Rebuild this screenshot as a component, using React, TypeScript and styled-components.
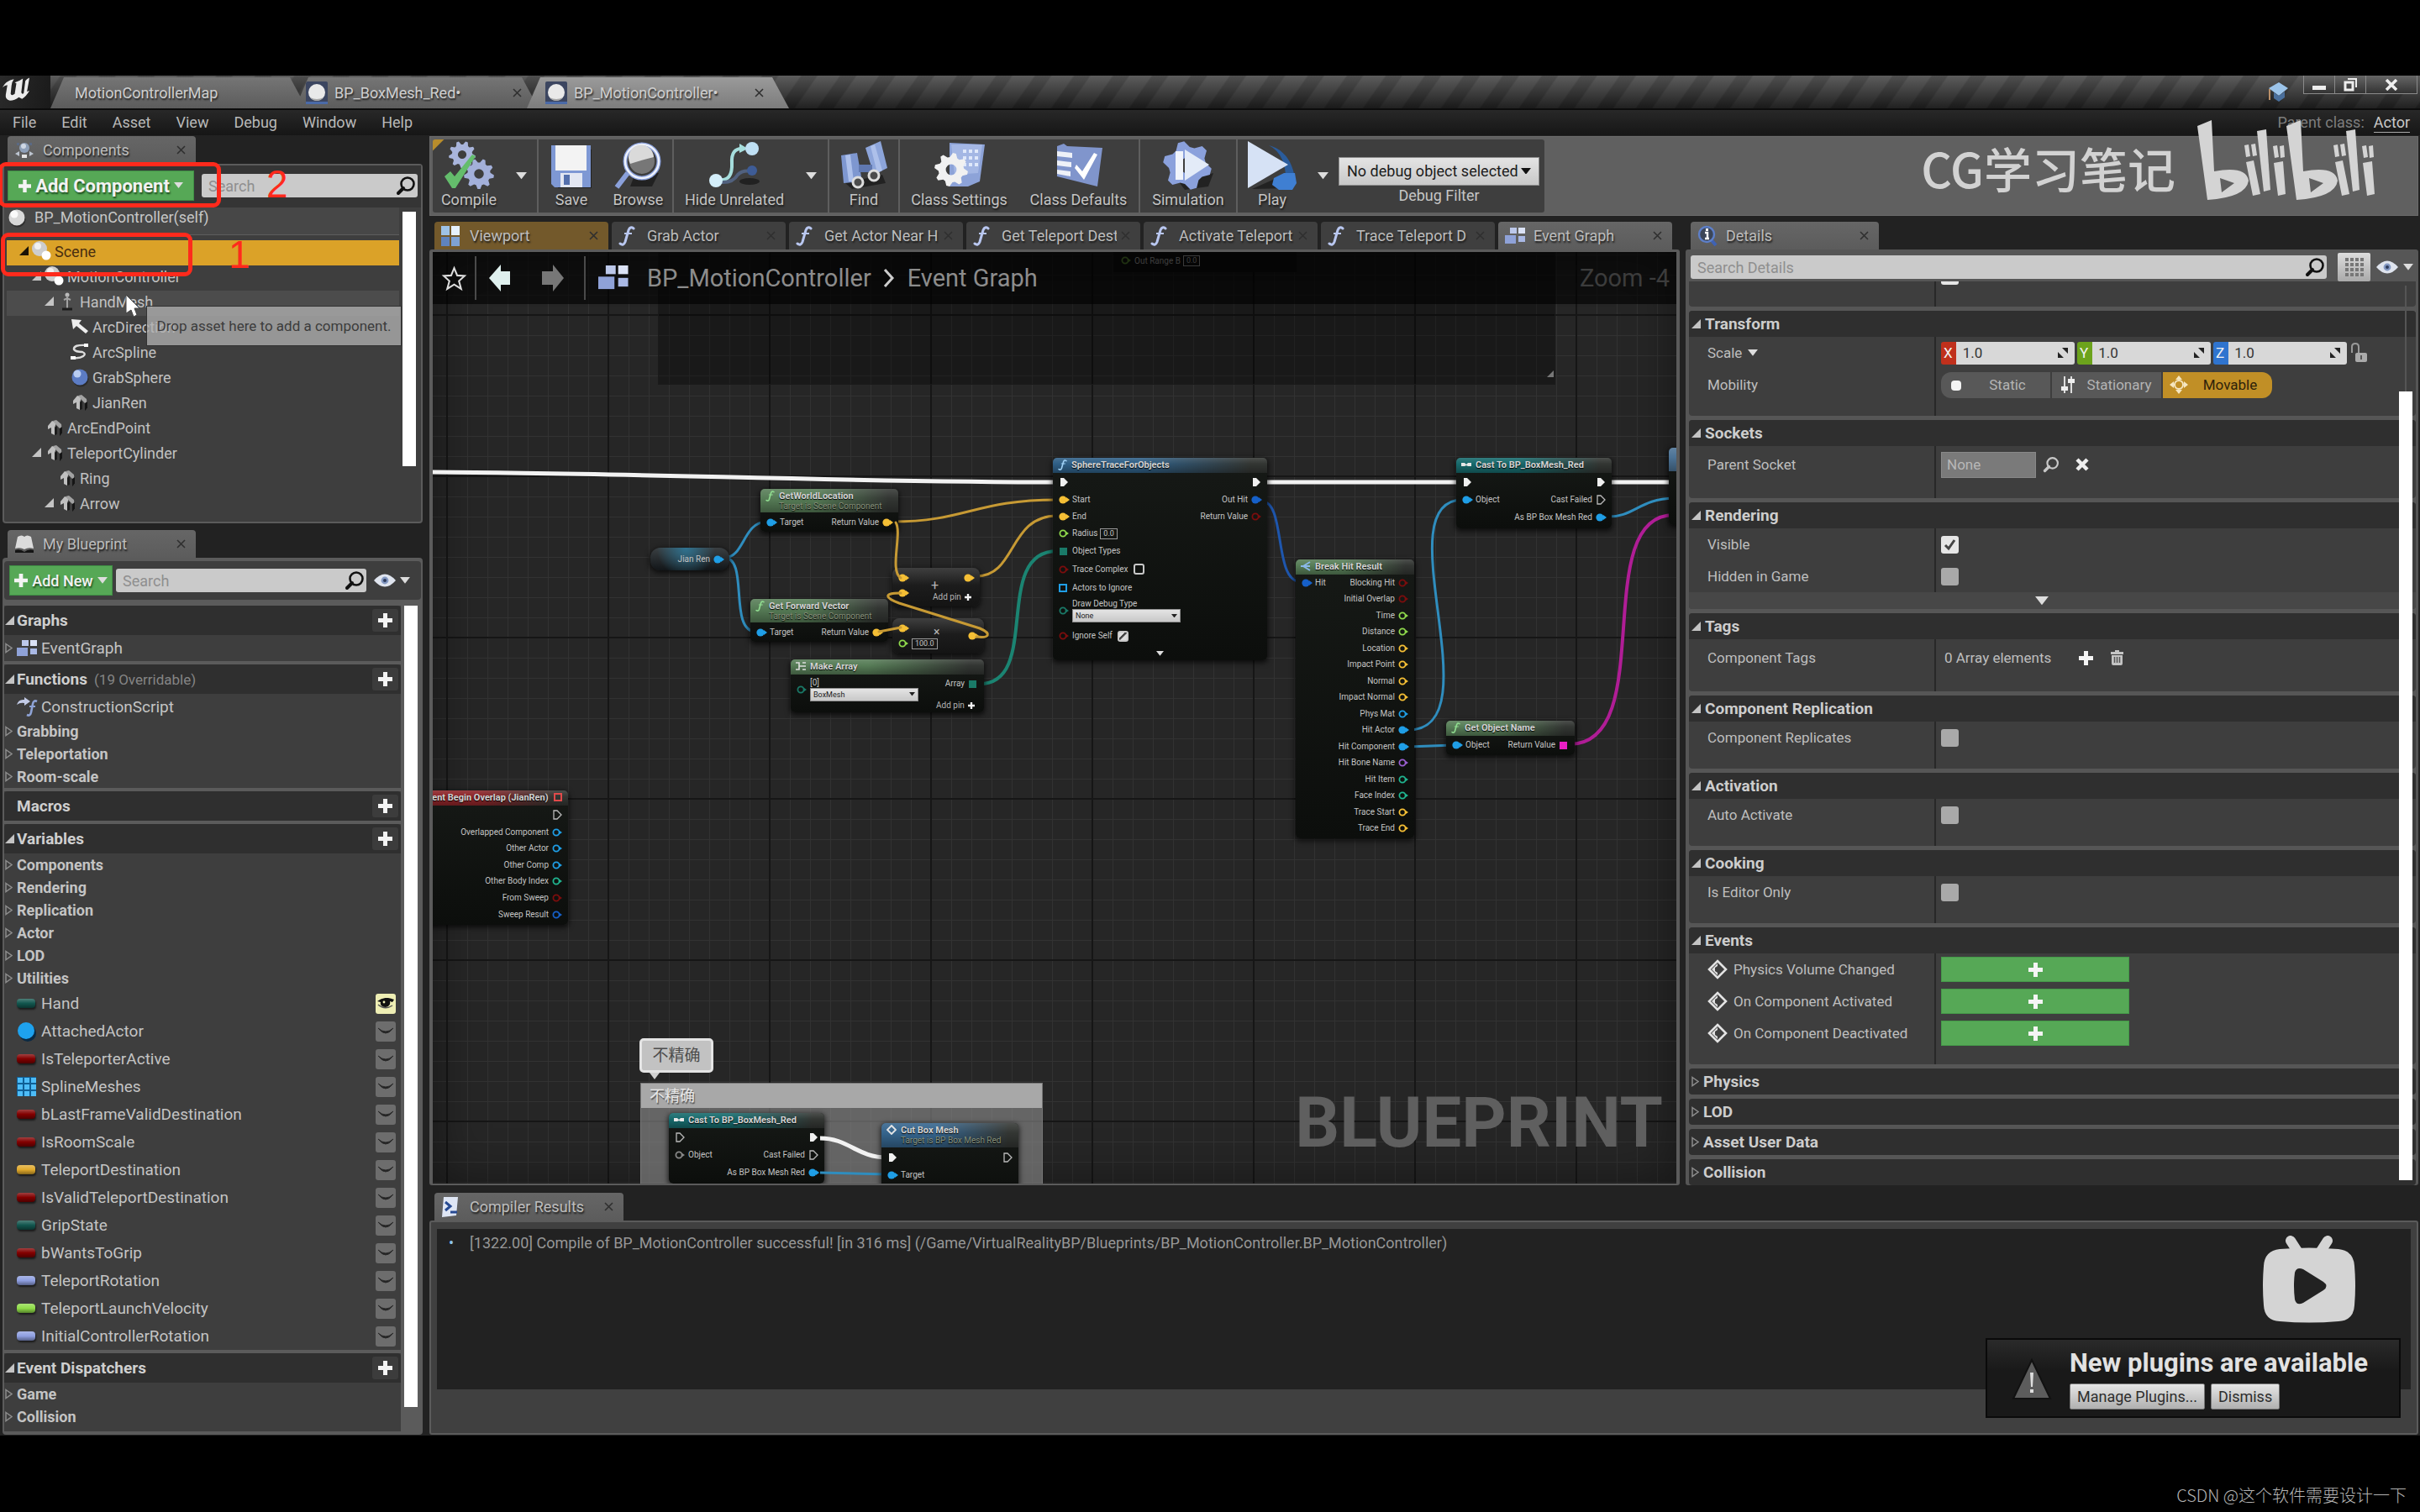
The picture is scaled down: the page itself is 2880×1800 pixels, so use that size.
import React from "react";
import styled, { createGlobalStyle, css } from "styled-components";

const GlobalStyle = createGlobalStyle`
  * { box-sizing: border-box; }
  html, body { margin: 0; background: #000; }
  body, button, input, select {
    font-family: Roboto, "Noto Sans CJK SC", sans-serif;
    font-size: 18px;
    color: #c6c6c6;
  }
  button { border: 0; padding: 0; background: none; cursor: pointer; }
  svg { display: block; flex: none; }
`;

const c = {
  frame: "#222222",
  edge: "#5b5b5b",
  body: "#3e3e3e",
  head: "#2f2f2f",
  green: "#56a856",
  gold: "#dba228",
  red: "#ff2a1c",
};

/* ---------- shell ---------- */

const Page = styled.div`
  height: 100vh;
  min-height: 1500px;
  display: flex;
  flex-direction: column;
  padding: 90px 0 91px;
  background: #000;
  position: relative;
  overflow: hidden;
`;

const Editor = styled.div`
  flex: 1;
  min-height: 0;
  display: flex;
  flex-direction: column;
  background: ${c.frame};
`;

const TitleBar = styled.header`
  height: 41px;
  display: flex;
  align-items: flex-end;
  background: linear-gradient(rgba(110, 110, 110, 0.55), rgba(20, 20, 20, 0.75)),
    repeating-linear-gradient(125deg, #484848 0 20px, #2a2a2a 22px 36px, #484848 38px);
  border-bottom: 2px solid #0c0c0c;
`;

const LogoBox = styled.div`
  width: 60px;
  height: 39px;
  padding-left: 2px;
  background: linear-gradient(100deg, #2a2a2a, #1a1a1a);
`;

const WindowTab = styled.button<{ $active?: boolean; $w: number; $pad: string; $first?: boolean }>`
  width: ${(p) => p.$w}px;
  height: 37px;
  margin-left: ${(p) => (p.$first ? 0 : -14)}px;
  padding: ${(p) => p.$pad};
  display: flex;
  align-items: center;
  gap: 8px;
  position: relative;
  z-index: ${(p) => (p.$active ? 2 : 1)};
  background: ${(p) =>
    p.$active ? "linear-gradient(#9a9a9a, #7c7c7c)" : "linear-gradient(#757575, #5c5c5c)"};
  clip-path: polygon(16px 0, calc(100% - 20px) 0, 100% 100%, 0 100%);
  color: #cfcfcf;
  text-shadow: 1px 2px 2px #222;
`;

const TabText = styled.span`
  flex: 1;
  overflow: hidden;
  white-space: nowrap;
  text-align: left;
`;

const CloseMark = () => (
  <svg width="11" height="11" viewBox="0 0 11 11" aria-hidden>
    <path d="M1 1L10 10M10 1L1 10" stroke="#2f2f2f" strokeWidth="1.6" />
  </svg>
);

const TitleRight = styled.div`
  margin-left: auto;
  align-self: stretch;
  display: flex;
  align-items: flex-start;
  gap: 17px;
  padding-right: 3px;
`;

const CapIcon = styled.div`
  padding-top: 7px;
`;

const WinButtons = styled.div`
  display: flex;
  border: 1px solid #8a8a8a;
  border-top: 0;
  background: linear-gradient(#666, #333);
`;

const WinButton = styled.button<{ $w: number }>`
  width: ${(p) => p.$w}px;
  height: 21px;
  display: grid;
  place-items: center;
  & + & { border-left: 1px solid #888; }
`;

const MenuBar = styled.nav`
  height: 30px;
  display: flex;
  align-items: center;
  background: linear-gradient(#282828, #161616);
`;

const MenuItem = styled.button`
  padding: 0 15px;
  line-height: 24px;
  color: #b9b9b9;
`;

const ParentClass = styled.div`
  margin-left: auto;
  padding-right: 12px;
  display: flex;
  gap: 11px;
  color: #7d7d7d;
  line-height: 22px;
`;

const ClassLink = styled.a`
  color: #c9c9c9;
  text-decoration: none;
  border-bottom: 1px solid #aaa;
`;

const Workspace = styled.div`
  flex: 1;
  min-height: 0;
  display: flex;
  gap: 8px;
  padding: 1px 2px 1px 3px;
`;

const LeftColumn = styled.aside`
  width: 500px;
  flex: none;
  display: flex;
  flex-direction: column;
  gap: 8px;
`;

const RightColumn = styled.main`
  flex: 1;
  min-width: 0;
  display: flex;
  flex-direction: column;
`;

const Dock = styled.section<{ $grow?: boolean; $w?: number }>`
  display: flex;
  flex-direction: column;
  min-height: 0;
  min-width: 0;
  ${(p) => p.$grow && css`flex: 1;`}
  ${(p) => p.$w && css`width: ${p.$w}px; flex: none;`}
`;

const TabStrip = styled.div`
  display: flex;
  gap: 4px;
  padding-left: 6px;
`;

const DockTab = styled.button<{ $w: number; $tone?: "gold" | "dim" }>`
  width: ${(p) => p.$w}px;
  height: 33px;
  padding: 0 12px 0 8px;
  display: flex;
  align-items: center;
  gap: 5px;
  border-radius: 4px 4px 0 0;
  background: ${(p) =>
    p.$tone === "gold" ? "#73592b" : p.$tone === "dim" ? "#3f3f3f" : "linear-gradient(#666, #5c5c5c)"};
  color: #bdbdbd;
  text-shadow: 1px 2px 2px #1a1a1a;
`;

const DockTabIcon = styled.span`
  width: 29px;
  flex: none;
`;

/* ---------- shared controls ---------- */

const GreenButton = styled.button<{ $w: number; $big?: boolean }>`
  width: ${(p) => p.$w}px;
  height: 36px;
  display: flex;
  align-items: center;
  justify-content: center;
  gap: 5px;
  flex: none;
  background: ${c.green};
  border: 1px solid #3f8f45;
  color: #f2f2f2;
  font-size: ${(p) => (p.$big ? 22 : 18)}px;
  font-weight: ${(p) => (p.$big ? 700 : 500)};
  text-shadow: 1px 2px 2px #1c4d1f;
  white-space: nowrap;
`;

const SearchBox = styled.label`
  flex: 1;
  min-width: 0;
  height: 28px;
  display: flex;
  align-items: center;
  padding: 0 2px 0 8px;
  border-radius: 3px;
  background: #cacaca;
`;

const SearchInput = styled.input`
  flex: 1;
  min-width: 0;
  border: 0;
  padding: 0;
  outline: 0;
  background: none;
  color: #333;
  &::placeholder { color: #8f8f8f; opacity: 1; }
`;

const Caret = ({ color = "#ddd", w = 14 }: { color?: string; w?: number }) => (
  <svg width={w} height={w * 0.64} viewBox="0 0 14 9" aria-hidden>
    <path d="M0 0H14L7 9Z" fill={color} />
  </svg>
);

const Magnifier = ({ color = "#111", size = 24 }: { color?: string; size?: number }) => (
  <svg width={size} height={size} viewBox="0 0 24 24" aria-hidden>
    <circle cx="14" cy="10" r="7.5" fill="none" stroke={color} strokeWidth="2.6" />
    <path d="M9 15L3 21" stroke={color} strokeWidth="4" strokeLinecap="round" />
  </svg>
);

const Plus = ({ size = 17 }: { size?: number }) => (
  <svg width={size} height={size} viewBox="0 0 17 17" aria-hidden>
    <path d="M6 0H11V6H17V11H11V17H6V11H0V6H6Z" fill="#f4f4f4" />
  </svg>
);

const EyeIcon = () => (
  <svg width="26" height="16" viewBox="0 0 26 16" aria-hidden>
    <path d="M0 8Q13 -7 26 8Q13 23 0 8Z" fill="#dfe4ee" />
    <circle cx="13" cy="8" r="4.4" fill="#8398c2" />
    <circle cx="13" cy="8" r="2" fill="#2e3c5c" />
  </svg>
);

const OpenTri = ({ color = "#c4c4c4" }: { color?: string }) => (
  <svg width="11" height="12" viewBox="0 0 11 12" aria-hidden>
    <path d="M11 0V11H0Z" fill={color} />
  </svg>
);

const ClosedTri = () => (
  <svg width="9" height="13" viewBox="0 0 9 13" aria-hidden>
    <path d="M1 1.5L8 6.5L1 11.5Z" fill="none" stroke="#8d8d8d" strokeWidth="1.5" />
  </svg>
);

/* ---------- icons ---------- */

const UnrealLogo = () => (
  <svg width="34" height="34" viewBox="0 0 35 34" role="img" aria-label="Unreal Engine">
    <path
      d="M1 14Q5 6 15 4Q12 8 12 12L11 22Q12 25 16 22L18 9L16 8Q22 6 26 3L24 20Q25 23 27 21L29 6Q31 3 34 2L33 8L31 19L34 18Q30 25 25 28L21 26Q16 30 10 30Q4 29 5 23L7 11Q4 11 1 14Z"
      fill="#ececec"
    />
  </svg>
);

const SphereBadge = () => (
  <svg width="26" height="28" viewBox="0 0 26 28" aria-hidden>
    <rect width="26" height="26" rx="2" fill="#3c4660" />
    <rect y="24" width="26" height="3" fill="#4a6aa8" />
    <circle cx="13" cy="13" r="10" fill="#e9e9e9" />
    <path d="M5 19A10 10 0 0 0 21 19Q13 23 5 19Z" fill="#a7a7a7" />
  </svg>
);

const SceneIcon = () => (
  <svg width="24" height="24" viewBox="0 0 24 24" aria-hidden>
    <circle cx="9" cy="9" r="9" fill="#cdcdcd" />
    <circle cx="7" cy="6" r="4" fill="#f0f0f0" />
    <circle cx="17" cy="17" r="5.5" fill="#fff" />
  </svg>
);

const BallIcon = ({ blue }: { blue?: boolean }) => (
  <svg width="24" height="24" viewBox="0 0 24 24" aria-hidden>
    <circle cx="13" cy="14" r="9.5" fill="#1f1f1f" opacity=".6" />
    <circle cx="12" cy="12" r="9.5" fill={blue ? "#5c7cc4" : "#d8d8d8"} />
    <circle cx="9" cy="8" r="4.5" fill={blue ? "#b9cdf2" : "#fafafa"} />
  </svg>
);

const MeshIcon = () => (
  <svg width="24" height="24" viewBox="0 0 24 24" aria-hidden>
    <path d="M4 10L9 4L14 6L12 12V21L8 19V12L4 14Z" fill="#c0c0c0" />
    <path d="M10 4L14 3L20 8L21 19L18 21V13L14 9Z" fill="#a2a2a2" />
    <path d="M12 12L15 10V20L12 21Z" fill="#1d1d1d" />
    <path d="M18 13L21 11V19L18 22Z" fill="#151515" />
  </svg>
);

const BonesIcon = () => (
  <svg width="24" height="24" viewBox="0 0 24 24" aria-hidden>
    <circle cx="12" cy="4" r="2.5" fill="#bbb" />
    <path d="M12 5V16M8 10L12 8L16 10M12 16V21" stroke="#a2a2a2" strokeWidth="2" fill="none" />
    <path d="M6 21H18" stroke="#1c1c1c" strokeWidth="3" />
  </svg>
);

const ArrowNwIcon = () => (
  <svg width="24" height="24" viewBox="0 0 24 24" aria-hidden>
    <path d="M2 3L14 4L11 8L22 17L19 20L8 11L4 15Z" fill="#ededed" />
  </svg>
);

const SplineIcon = () => (
  <svg width="24" height="24" viewBox="0 0 24 24" aria-hidden>
    <path d="M20 4Q4 3 5 9Q7 12 15 12Q20 14 16 17Q12 20 4 19" fill="none" stroke="#ddd" strokeWidth="2.4" />
    <rect x="17" y="2" width="5" height="4" fill="#fff" />
    <rect x="1" y="17" width="6" height="4" fill="#fff" />
  </svg>
);

const ComponentsIcon = () => (
  <svg width="24" height="20" viewBox="0 0 24 20" aria-hidden>
    <circle cx="12" cy="7" r="6" fill="#8fa0b8" />
    <circle cx="11" cy="5" r="3" fill="#d0d8e4" />
    <path d="M1 14L6 11V17ZM23 14L18 11V17Z" fill="#bcc4d0" />
    <rect x="9" y="15" width="6" height="4" fill="#e5e5e5" />
    <rect x="3" y="1" width="3" height="3" fill="#5a6a84" />
    <rect x="18" y="1" width="3" height="3" fill="#5a6a84" />
  </svg>
);

const BookIcon = () => (
  <svg width="24" height="22" viewBox="0 0 24 22" aria-hidden>
    <path d="M1 16L4 2Q9 -1 12 2Q15 -1 20 2L23 16Q17 14 12 17Q7 14 1 16Z" fill="#dcdcdc" />
    <path d="M1 18Q7 16 12 20Q17 16 23 18V21H1Z" fill="#141414" />
  </svg>
);

const GraphIcon = ({ w = 25 }: { w?: number }) => (
  <svg width={w} height={w * 0.8} viewBox="0 0 25 20" aria-hidden>
    <rect x="6" y="0" width="8" height="7" fill="#bcc8ea" />
    <rect x="16" y="0" width="8" height="7" fill="#dbe2f5" />
    <rect x="0" y="9" width="13" height="10" fill="#8fa2d8" />
    <rect x="16" y="10" width="8" height="7" fill="#a9b8e4" />
  </svg>
);

const ViewportIcon = () => (
  <svg width="22" height="24" viewBox="0 0 22 24" aria-hidden>
    <rect width="10" height="11" fill="#9ec2e6" />
    <rect x="12" width="10" height="11" fill="#e6f1fb" />
    <rect y="13" width="10" height="11" fill="#5f83bd" />
    <rect x="12" y="13" width="10" height="11" fill="#7fa2d2" />
  </svg>
);

const FuncIcon = ({ w = 20, color = "#b9c7f0" }: { w?: number; color?: string }) => (
  <svg width={w} height={w * 1.2} viewBox="0 0 20 24" aria-hidden>
    <path d="M18 3Q14 0 12 5L8 19Q6 24 2 21" fill="none" stroke={color} strokeWidth="3" strokeLinecap="round" />
    <path d="M7 9H16" stroke={color} strokeWidth="2" />
  </svg>
);

const ConstructIcon = () => (
  <svg width="25" height="24" viewBox="0 0 25 24" aria-hidden>
    <path d="M0 9Q2 2 9 3V0L16 5L9 10V7Q4 6 0 9Z" fill="#c3cbe6" />
    <path d="M24 5Q20 3 19 8L17 18Q16 23 12 21" fill="none" stroke="#8ea3d6" strokeWidth="2.6" />
    <path d="M15 11H22" stroke="#8ea3d6" strokeWidth="2" />
  </svg>
);

const InfoIcon = () => (
  <svg width="24" height="26" viewBox="0 0 24 26" aria-hidden>
    <path d="M16 17L22 24" stroke="#3f62b4" strokeWidth="4" />
    <circle cx="11" cy="11" r="9" fill="#3c4658" stroke="#5d7fc9" strokeWidth="2.4" />
    <path d="M9 9H12V16M9 16H14" stroke="#fff" strokeWidth="2.4" fill="none" />
    <rect x="10" y="4" width="3" height="3" fill="#fff" />
  </svg>
);

const ConsoleIcon = () => (
  <svg width="22" height="24" viewBox="0 0 22 24" aria-hidden>
    <path d="M3 0H20L18 22L1 24Z" fill="#dfe6f5" />
    <path d="M5 6L11 11L5 16" stroke="#274a92" strokeWidth="3" fill="none" />
    <path d="M11 18H19" stroke="#274a92" strokeWidth="3" />
  </svg>
);

const gearPath = (cx: number, cy: number, r: number, teeth: number) => {
  const pts: string[] = [];
  for (let i = 0; i < teeth * 4; i++) {
    const a = ((i + 0.5) / (teeth * 4)) * Math.PI * 2;
    const rr = i % 4 < 2 ? r : r * 0.76;
    pts.push(`${(cx + Math.cos(a) * rr).toFixed(1)} ${(cy + Math.sin(a) * rr).toFixed(1)}`);
  }
  const h = r * 0.32;
  return `M${pts.join("L")}ZM${cx - h} ${cy}a${h} ${h} 0 1 0 ${h * 2} 0a${h} ${h} 0 1 0 ${-h * 2} 0Z`;
};

const ToolSvg = ({ children }: { children: React.ReactNode }) => (
  <svg width="60" height="58" viewBox="0 0 60 58" aria-hidden>
    {children}
  </svg>
);

const toolIcons: Record<string, React.ReactNode> = {
  Compile: (
    <ToolSvg>
      <path d={gearPath(22, 16, 16, 9)} fill="#a9b5dc" fillRule="evenodd" />
      <path d={gearPath(42, 39, 18, 9)} fill="#a3b0da" fillRule="evenodd" />
      <path d="M1 42L8 36L13 42L34 16L38 18L14 56H10Z" fill="#64bd6c" />
    </ToolSvg>
  ),
  Save: (
    <ToolSvg>
      <path d="M10 8L54 10V56H14Z" fill="#111" opacity=".6" />
      <path d="M6 5H53V55H10L6 51Z" fill="#7e98d4" />
      <rect x="11" y="5" width="37" height="30" fill="#f3f3f3" />
      <rect x="17" y="38" width="26" height="17" fill="#e3e7f2" />
      <rect x="21" y="40" width="7" height="12" fill="#5570ad" />
    </ToolSvg>
  ),
  Browse: (
    <ToolSvg>
      <path d="M26 38H54L46 54H20Z" fill="#0f0f0f" opacity=".6" />
      <path d="M17 38L4 55" stroke="#8aa0da" strokeWidth="6" />
      <circle cx="34" cy="24" r="20" fill="#3e3e3e" stroke="#8ba1dc" strokeWidth="5" />
      <circle cx="34" cy="24" r="20" fill="none" stroke="#eef2fb" strokeWidth="2.5" />
      <circle cx="34" cy="24" r="15" fill="#777" />
      <path d="M20 27A15 15 0 1 1 48 19Q36 22 20 27Z" fill="#dadada" />
    </ToolSvg>
  ),
  "Hide Unrelated": (
    <ToolSvg>
      <path d="M12 46Q28 48 27 26Q26 8 40 9" fill="none" stroke="#a6dedd" strokeWidth="4" />
      <path d="M14 49Q28 50 34 40Q40 34 50 36" fill="none" stroke="#51617e" strokeWidth="4" />
      <path d="M36 3L46 9L36 14Z" fill="#a6dedd" />
      <circle cx="51" cy="9" r="8" fill="#bfe0f4" />
      <circle cx="8" cy="47" r="8" fill="#d4eefa" />
      <circle cx="51" cy="35" r="6" fill="#3e5c96" />
      <ellipse cx="48" cy="48" rx="12" ry="4" fill="#151515" opacity=".7" />
    </ToolSvg>
  ),
  Find: (
    <ToolSvg>
      <path d="M8 50L52 40L56 50L16 57Z" fill="#101010" opacity=".6" />
      <path d="M3 17L22 14L28 48L6 50Z" fill="#7e97d0" />
      <path d="M32 8L50 0L58 32L42 40Z" fill="#8da5da" />
      <path d="M8 17L14 16L18 48H12ZM38 6L43 4L52 35L46 38Z" fill="#adc0ea" />
      <rect x="24" y="28" width="16" height="9" fill="#6078b0" />
      <circle cx="23" cy="49" r="6" fill="#4c4c4c" stroke="#ddd" strokeWidth="3" />
      <circle cx="42" cy="41" r="6" fill="#4c4c4c" stroke="#ddd" strokeWidth="3" />
    </ToolSvg>
  ),
  "Class Settings": (
    <ToolSvg>
      <path d="M18 2L60 4L54 48L40 54H18Z" fill="#8da3d8" />
      <path d="M20 4H57L52 38L24 40Z" fill="#a4b7e4" />
      <g fill="#dfe8fa">
        {[10, 18, 26].map((y) => [34, 41, 48].map((x) => <rect key={`${x}-${y}`} x={x} y={y} width="4" height="4" />))}
      </g>
      <path d={gearPath(20, 34, 20, 8)} fill="#f1f1f1" fillRule="evenodd" />
    </ToolSvg>
  ),
  "Class Defaults": (
    <ToolSvg>
      <path d="M4 6L12 3L16 6L58 8L52 54L4 42Z" fill="#8095cc" />
      <path d="M4 12L22 14V20L4 18ZM4 23L21 25V31L4 29ZM4 34L20 36V42L4 39Z" fill="#eef1f8" />
      <path d="M27 28L34 36L48 14L52 16L36 46L25 32Z" fill="#fff" />
    </ToolSvg>
  ),
  Simulation: (
    <ToolSvg>
      <path d="M20 50L60 38L54 54L26 58Z" fill="#101010" opacity=".6" />
      <path d={gearPath(29, 29, 29, 6)} fill="#8ba1dc" />
      <rect x="15" y="12" width="9" height="34" fill="#f0f4fb" />
      <path d="M26 10L55 28L26 47Z" fill="#e3ebf8" />
    </ToolSvg>
  ),
  Play: (
    <ToolSvg>
      <path d="M6 57L44 40L50 56Z" fill="#101010" opacity=".6" />
      <path d="M26 5Q52 12 57 44L46 40Q44 14 26 5Z" fill="#2a5c9c" />
      <path d="M32 44L44 38H57L59 50L54 58H38L30 52Z" fill="#3f7fd2" />
      <path d="M1 0L49 28L1 56Z" fill="#d6e2f5" />
    </ToolSvg>
  ),
};

/* ---------- components panel ---------- */

const ComponentsBody = styled.div`
  display: flex;
  flex-direction: column;
  border: 2px solid ${c.edge};
  border-radius: 4px;
  background: ${c.body};
  padding-bottom: 5px;
`;

const ComponentsHead = styled.div`
  display: flex;
  align-items: center;
  gap: 9px;
  padding: 6px 4px 8px;
  background: #353535;
`;

const ScrollRow = styled.div`
  display: flex;
  flex: 1;
  min-height: 0;
`;

const TreeArea = styled.div`
  flex: 1;
  min-width: 0;
`;

const Gutter = styled.div<{ $light?: boolean }>`
  width: ${(p) => (p.$light ? 24 : 26)}px;
  flex: none;
  padding: 0 4px;
  background: ${(p) => (p.$light ? c.edge : "none")};
`;

const Thumb = styled.div<{ $h: number; $top?: number }>`
  width: 16px;
  height: ${(p) => p.$h}%;
  margin-top: ${(p) => p.$top || 0}px;
  background: #fff;
`;

const SelfRow = styled.div`
  height: 33px;
  display: flex;
  gap: 9px;
  padding-left: 3px;
  margin-bottom: 6px;
  line-height: 24px;
  background: #474747;
  border-bottom: 1px solid #5e5e5e;
`;

const TreeRow = styled.div<{ $depth: number; $state?: "selected" | "hover" }>`
  height: 30px;
  margin-left: 3px;
  padding: 0 0 4px ${(p) => 15 + p.$depth * 15}px;
  display: flex;
  align-items: center;
  color: ${(p) => (p.$state === "selected" ? "#4a2f10" : "#c2c2c2")};
  background: ${(p) =>
    p.$state === "selected" ? c.gold : p.$state === "hover" ? "#4c4c4c" : "none"};
`;

const TreeArrow = styled.span`
  width: 15px;
`;

const TreeIcon = styled.span`
  width: 27px;
`;

const tree: { depth: number; label: string; icon: React.ReactNode; open?: boolean; state?: "selected" | "hover" }[] = [
  { depth: 0, label: "Scene", icon: <SceneIcon />, open: true, state: "selected" },
  { depth: 1, label: "MotionController", icon: <SceneIcon />, open: true },
  { depth: 2, label: "HandMesh", icon: <BonesIcon />, open: true, state: "hover" },
  { depth: 3, label: "ArcDirection", icon: <ArrowNwIcon /> },
  { depth: 3, label: "ArcSpline", icon: <SplineIcon /> },
  { depth: 3, label: "GrabSphere", icon: <BallIcon blue /> },
  { depth: 3, label: "JianRen", icon: <MeshIcon /> },
  { depth: 1, label: "ArcEndPoint", icon: <MeshIcon /> },
  { depth: 1, label: "TeleportCylinder", icon: <MeshIcon />, open: true },
  { depth: 2, label: "Ring", icon: <MeshIcon /> },
  { depth: 2, label: "Arrow", icon: <MeshIcon />, open: true },
];

const ComponentsPanel = () => (
  <Dock>
    <TabStrip>
      <DockTab $w={224}>
        <DockTabIcon><ComponentsIcon /></DockTabIcon>
        <TabText>Components</TabText>
        <CloseMark />
      </DockTab>
    </TabStrip>
    <ComponentsBody>
      <ComponentsHead>
        <GreenButton $w={222} $big>
          <Plus size={15} /> Add Component <Caret w={11} />
        </GreenButton>
        <SearchBox>
          <SearchInput aria-label="Search components" placeholder="Search" />
          <Magnifier />
        </SearchBox>
      </ComponentsHead>
      <ScrollRow>
        <TreeArea>
          <SelfRow>
            <BallIcon /> BP_MotionController(self)
          </SelfRow>
          {tree.map((t) => (
            <TreeRow key={t.label} $depth={t.depth} $state={t.state}>
              <TreeArrow>{t.open && <OpenTri color={t.state === "selected" ? "#1a1206" : undefined} />}</TreeArrow>
              <TreeIcon>{t.icon}</TreeIcon>
              {t.label}
            </TreeRow>
          ))}
        </TreeArea>
        <Gutter>
          <Thumb $h={82} $top={5} />
        </Gutter>
      </ScrollRow>
    </ComponentsBody>
  </Dock>
);

/* ---------- my blueprint ---------- */

const BlueprintBody = styled.div`
  flex: 1;
  min-height: 0;
  display: flex;
  flex-direction: column;
  gap: 7px;
  padding: 4px 2px 4px;
  border-radius: 4px;
  background: ${c.edge};
`;

const BlueprintHead = styled.div`
  height: 46px;
  flex: none;
  display: flex;
  align-items: center;
  gap: 4px;
  padding: 0 13px 0 6px;
  border-radius: 4px;
  background: ${c.body};
`;

const EyeButton = styled.button`
  display: flex;
  align-items: center;
  gap: 5px;
  margin-left: 5px;
`;

const GroupList = styled.div`
  flex: 1;
  min-width: 0;
  display: flex;
  flex-direction: column;
  gap: 4px;
`;

const Group = styled.div<{ $grow?: boolean }>`
  background: ${c.body};
  ${(p) => p.$grow && css`flex: 1;`}
`;

const GroupHead = styled.div`
  height: 35px;
  display: flex;
  align-items: center;
  padding: 0 3px 0 1px;
  border-radius: 4px 4px 0 0;
  background: ${c.head};
  font-size: 19px;
  font-weight: 700;
  color: #cfcfcf;
`;

const ArrowSlot = styled.span`
  width: 14px;
  flex: none;
`;

const GroupNote = styled.span`
  margin-left: 8px;
  font-size: 17px;
  font-weight: 400;
  color: #858585;
`;

const AddButton = styled.button`
  width: 31px;
  height: 27px;
  margin-left: auto;
  display: grid;
  place-items: center;
  border-radius: 3px;
  background: #3c3c3c;
`;

const ItemRow = styled.div<{ $h: number; $bold?: boolean }>`
  height: ${(p) => p.$h}px;
  display: flex;
  align-items: center;
  padding: 0 6px 0 1px;
  font-size: ${(p) => (p.$bold ? 18 : 19)}px;
  font-weight: ${(p) => (p.$bold ? 700 : 400)};
  color: #c4c4c4;
`;

const ItemIcon = styled.span`
  width: 29px;
  flex: none;
`;

const Pill = styled.span<{ $color: string }>`
  display: block;
  width: 22px;
  height: 11px;
  border-radius: 4px;
  background: linear-gradient(rgba(255, 255, 255, 0.25), transparent 50%, rgba(0, 0, 0, 0.4)), ${(p) => p.$color};
  box-shadow: 1px 2px 2px #1c1c1c;
`;

const EyeToggle = styled.button<{ $on?: boolean }>`
  width: 24px;
  height: 24px;
  margin-left: auto;
  display: grid;
  place-items: center;
  border-radius: 3px;
  background: ${(p) => (p.$on ? "#eeeeb4" : "#6d6d6d")};
`;

const ClosedEye = () => (
  <svg width="20" height="10" viewBox="0 0 20 10" aria-hidden>
    <path d="M1 1Q10 9 19 1Q10 13 1 1Z" fill="#222" stroke="#2a2a2a" strokeWidth="1" />
  </svg>
);

const OpenEye = () => (
  <svg width="20" height="14" viewBox="0 0 20 14" aria-hidden>
    <path d="M0 4Q9 -3 20 2L18 5L15 4Q16 8 13 10Q9 12 6 10Q3 8 4 5Z" fill="#111" />
    <path d="M1 8Q9 15 18 9" fill="none" stroke="#555" strokeWidth="1.4" />
    <circle cx="8" cy="5" r="1.4" fill="#eeeeb4" />
  </svg>
);

const vars: [string, string][] = [
  ["Hand", "#12564e"],
  ["AttachedActor", "ball"],
  ["IsTeleporterActive", "#820000"],
  ["SplineMeshes", "grid"],
  ["bLastFrameValidDestination", "#820000"],
  ["IsRoomScale", "#820000"],
  ["TeleportDestination", "#e0a92c"],
  ["IsValidTeleportDestination", "#820000"],
  ["GripState", "#12564e"],
  ["bWantsToGrip", "#820000"],
  ["TeleportRotation", "#8f9fe0"],
  ["TeleportLaunchVelocity", "#8fdc48"],
  ["InitialControllerRotation", "#8f9fe0"],
];

const VarIcon = ({ kind }: { kind: string }) => {
  if (kind === "ball")
    return (
      <svg width="24" height="24" viewBox="0 0 24 24" aria-hidden>
        <circle cx="13" cy="14" r="10" fill="#0a2a44" />
        <circle cx="11" cy="11" r="10" fill="#1ea2ee" />
      </svg>
    );
  if (kind === "grid")
    return (
      <svg width="23" height="23" viewBox="0 0 23 23" aria-hidden>
        <rect width="23" height="23" fill="#0f5f96" />
        {[1, 9, 17].map((x) => [1, 9, 17].map((y) => <rect key={`${x}-${y}`} x={x} y={y} width="6" height="6" fill="#4dbcf7" />))}
      </svg>
    );
  return <Pill $color={kind} />;
};

const Header = ({ label, note, open = true }: { label: string; note?: string; open?: boolean }) => (
  <GroupHead>
    <ArrowSlot>{open && <OpenTri />}</ArrowSlot>
    {label}
    {note && <GroupNote>{note}</GroupNote>}
    <AddButton aria-label={`Add ${label}`}><Plus /></AddButton>
  </GroupHead>
);

const Categories = ({ names }: { names: string[] }) => (
  <>
    {names.map((n) => (
      <ItemRow key={n} $h={27} $bold>
        <ArrowSlot><ClosedTri /></ArrowSlot>
        {n}
      </ItemRow>
    ))}
  </>
);

const BlueprintPanel = () => (
  <Dock $grow>
    <TabStrip>
      <DockTab $w={224}>
        <DockTabIcon><BookIcon /></DockTabIcon>
        <TabText>My Blueprint</TabText>
        <CloseMark />
      </DockTab>
    </TabStrip>
    <BlueprintBody>
      <BlueprintHead>
        <GreenButton $w={123}>
          <Plus size={16} /> Add New <Caret w={12} />
        </GreenButton>
        <SearchBox>
          <SearchInput aria-label="Search blueprint" placeholder="Search" />
          <Magnifier />
        </SearchBox>
        <EyeButton aria-label="View options"><EyeIcon /><Caret w={12} /></EyeButton>
      </BlueprintHead>
      <ScrollRow>
        <GroupList>
          <Group>
            <Header label="Graphs" />
            <ItemRow $h={31}>
              <ArrowSlot><ClosedTri /></ArrowSlot>
              <ItemIcon><GraphIcon /></ItemIcon>
              EventGraph
            </ItemRow>
          </Group>
          <Group>
            <Header label="Functions" note="(19 Overridable)" />
            <ItemRow $h={31}>
              <ArrowSlot />
              <ItemIcon><ConstructIcon /></ItemIcon>
              ConstructionScript
            </ItemRow>
            <Categories names={["Grabbing", "Teleportation", "Room-scale"]} />
          </Group>
          <Group>
            <Header label="Macros" open={false} />
          </Group>
          <Group>
            <Header label="Variables" />
            <Categories names={["Components", "Rendering", "Replication", "Actor", "LOD", "Utilities"]} />
            {vars.map(([name, kind], i) => (
              <ItemRow key={name} $h={33}>
                <ArrowSlot />
                <ItemIcon><VarIcon kind={kind} /></ItemIcon>
                {name}
                <EyeToggle $on={i === 0} aria-label={`Toggle ${name}`}>{i === 0 ? <OpenEye /> : <ClosedEye />}</EyeToggle>
              </ItemRow>
            ))}
          </Group>
          <Group $grow>
            <Header label="Event Dispatchers" />
            <Categories names={["Game", "Collision"]} />
          </Group>
        </GroupList>
        <Gutter $light>
          <Thumb $h={97} />
        </Gutter>
      </ScrollRow>
    </BlueprintBody>
  </Dock>
);

/* ---------- toolbar ---------- */

const Toolbar = styled.div`
  height: 95px;
  flex: none;
  margin-bottom: 7px;
  padding: 3px;
  display: flex;
  background: #606060;
  border: 1px solid #6a6a6a;
`;

const ToolTray = styled.div`
  display: flex;
  padding-right: 6px;
  border-radius: 3px;
  background: linear-gradient(135deg, #b88d2c 9px, transparent 10px), ${c.body};
`;

const ToolGroup = styled.div`
  display: flex;
  & + & { border-left: 2px solid #5e5e5e; }
`;

const ToolButton = styled.button<{ $w: number }>`
  width: ${(p) => p.$w}px;
  display: flex;
  flex-direction: column;
  align-items: center;
  padding-top: 2px;
  line-height: 24px;
  color: #c4c4c4;
  text-shadow: 1px 2px 2px #1a1a1a;
  white-space: nowrap;
`;

const ToolCaret = styled.button<{ $w: number }>`
  width: ${(p) => p.$w}px;
  display: grid;
  place-items: center;
`;

const DebugFilter = styled.label`
  display: flex;
  flex-direction: column;
  align-items: center;
  justify-content: center;
  padding-top: 12px;
  line-height: 24px;
`;

const SelectShell = styled.span<{ $w: number; $h: number; $pad: number }>`
  width: ${(p) => p.$w}px;
  height: ${(p) => p.$h}px;
  display: inline-flex;
  align-items: center;
  padding: 0 ${(p) => p.$pad}px;
  background: linear-gradient(#e4e4e4, #c8c8c8);
  border: 1px solid #8e8e8e;
`;

const BareSelect = styled.select<{ $size: number }>`
  flex: 1;
  min-width: 0;
  appearance: none;
  border: 0;
  padding: 0;
  background: none;
  color: #1c1c1c;
  font-size: ${(p) => p.$size}px;
`;

const tools: { items: [string, number][]; caret?: number }[] = [
  { items: [["Compile", 86]], caret: 38 },
  { items: [["Save", 78], ["Browse", 81]] },
  { items: [["Hide Unrelated", 144]], caret: 39 },
  { items: [["Find", 82]] },
  { items: [["Class Settings", 141], ["Class Defaults", 143]] },
  { items: [["Simulation", 114]] },
  { items: [["Play", 82]], caret: 38 },
];

const MainToolbar = () => (
  <Toolbar>
    <ToolTray>
      {tools.map((g) => (
        <ToolGroup key={g.items[0][0]}>
          {g.items.map(([label, w]) => (
            <ToolButton key={label} $w={w}>
              {toolIcons[label]}
              {label}
            </ToolButton>
          ))}
          {g.caret && (
            <ToolCaret $w={g.caret} aria-label="More"><Caret w={13} /></ToolCaret>
          )}
        </ToolGroup>
      ))}
      <DebugFilter>
        <SelectShell $w={239} $h={34} $pad={9}>
          <BareSelect $size={18} defaultValue="none">
            <option value="none">No debug object selected</option>
          </BareSelect>
          <Caret color="#111" w={12} />
        </SelectShell>
        Debug Filter
      </DebugFilter>
    </ToolTray>
  </Toolbar>
);

/* ---------- graph ---------- */

const VIEW = { x: 515, y: 300 };

const GraphFrame = styled.div`
  flex: 1;
  min-height: 0;
  display: flex;
  border: 4px solid ${c.edge};
  border-top-width: 3px;
  border-bottom-width: 2px;
  border-radius: 3px;
`;

const Canvas = styled.div`
  flex: 1;
  position: relative;
  overflow: hidden;
  background-color: #262626;
  background-image: linear-gradient(90deg, #161616 2px, transparent 2px),
    linear-gradient(#161616 2px, transparent 2px), linear-gradient(90deg, #323232 1px, transparent 1px),
    linear-gradient(#323232 1px, transparent 1px);
  background-size: 192px 192px, 192px 192px, 24px 24px, 24px 24px;
  background-position: 16px 74px, 16px 74px, 17px 3px, 17px 3px;
`;

const Vignette = styled.div`
  position: absolute;
  inset: 0;
  box-shadow: inset 0 0 60px rgba(0, 0, 0, 0.45);
`;

const Wires = styled.svg`
  position: absolute;
  inset: 0;
  width: 100%;
  height: 100%;
`;

const DarkComment = styled.div`
  position: absolute;
  left: 268px;
  top: 0;
  width: 1068px;
  height: 158px;
  background: rgba(0, 0, 0, 0.32);
  border: 1px solid #1a1a1a;
`;

const GraphBar = styled.div`
  position: absolute;
  inset: 0 0 auto 0;
  height: 62px;
  display: flex;
  align-items: center;
  padding: 0 8px 0 10px;
  background: rgba(0, 0, 0, 0.62);
  font-size: 29px;
  color: #8c8c8c;
`;

const BarRule = styled.span<{ $before: number }>`
  width: 2px;
  height: 52px;
  margin: 0 15px 0 ${(p) => p.$before}px;
  background: #4a4a4a;
`;

const BarGap = styled.span`
  width: 36px;
`;

const BarCrumb = styled.span`
  margin: 0 14px 0 21px;
`;

const ZoomText = styled.span`
  margin-left: auto;
  color: #3c3c3c;
`;

const Crumb2 = styled.span`
  margin-left: 15px;
`;

const BlueprintMark = styled.div`
  position: absolute;
  right: 16px;
  bottom: 22px;
  font-size: 83px;
  line-height: 100px;
  font-weight: 700;
  color: #5f5f5f;
`;

const NodeBox = styled.div<{ $x: number; $y: number; $w: number; $h: number }>`
  position: absolute;
  left: ${(p) => p.$x - VIEW.x}px;
  top: ${(p) => p.$y - VIEW.y}px;
  width: ${(p) => p.$w}px;
  height: ${(p) => p.$h}px;
  border-radius: 5px;
  overflow: hidden;
  background: linear-gradient(#161916, #0c0e0c);
  box-shadow: 0 2px 6px 1px rgba(0, 0, 0, 0.7);
  font-size: 10px;
  line-height: 12px;
  color: #c4c4c4;
  white-space: nowrap;
`;

const NodeHead = styled.div<{ $tone: string; $h: number }>`
  height: ${(p) => p.$h}px;
  padding: 2px 6px;
  display: flex;
  gap: 5px;
  font-size: 11px;
  line-height: 13px;
  font-weight: 700;
  color: #d2d2d2;
  text-shadow: 0 1px 1px #000;
  background: linear-gradient(rgba(255, 255, 255, 0.12), transparent 40%, rgba(0, 0, 0, 0.3)),
    linear-gradient(95deg, ${(p) => p.$tone} 40%, #333633 92%);
`;

const NodeTitle = styled.div`
  flex: 1;
`;

const NodeSub = styled.div`
  font-size: 10px;
  line-height: 12px;
  font-weight: 400;
  color: #86907a;
`;

const PinRow = styled.div<{ $h: number }>`
  height: ${(p) => p.$h}px;
  display: flex;
  justify-content: space-between;
  align-items: center;
  padding: 0 6px;
`;

const Side = styled.div`
  display: flex;
  align-items: center;
  gap: 3px;
`;

const ValueBox = styled.span`
  padding: 0 3px;
  border: 1px solid #999;
  font-size: 9px;
  line-height: 11px;
`;

const MiniCheck = styled.input`
  appearance: none;
  width: 13px;
  height: 13px;
  margin: 0 0 0 3px;
  border: 2px solid #c8c8c8;
  border-radius: 3px;
  &:checked { background: linear-gradient(135deg, #ddd 35%, #444 36% 55%, #ddd 56%); }
`;

const Stack = styled.div<{ $gap?: number }>`
  display: flex;
  flex-direction: column;
  gap: ${(p) => p.$gap || 0}px;
`;

const TopSide = styled.div`
  align-self: flex-start;
  padding-top: 5px;
`;

const col = {
  blue: "#1f9ee6",
  deep: "#1660c8",
  gold: "#f5bf35",
  red: "#7c0d0d",
  green: "#8fd94c",
  teal: "#1a7a68",
  cyan: "#20b590",
  pink: "#e81fc4",
  violet: "#9a5fd0",
};

type PinKind = "exec" | "execOpen" | "dot" | "ring" | "square" | "squareOpen";

const Pin = ({ k, color = "#f0f0f0" }: { k: PinKind; color?: string }) => (
  <svg width="14" height="12" viewBox="0 0 14 12" aria-hidden>
    {k === "exec" && <path d="M3 1H7L12 6L7 11H3Z" fill={color} />}
    {k === "execOpen" && <path d="M3 1H7L12 6L7 11H3Z" fill="none" stroke="#bbb" strokeWidth="1.3" />}
    {k === "dot" && (
      <g fill={color}>
        <circle cx="6" cy="6" r="4.6" />
        <path d="M10 3L14 6L10 9Z" />
      </g>
    )}
    {k === "ring" && (
      <g>
        <circle cx="6" cy="6" r="3.6" fill="none" stroke={color} strokeWidth="1.8" />
        <path d="M10 4L13 6L10 8Z" fill={color} />
      </g>
    )}
    {k === "square" && <rect x="2" y="2" width="9" height="9" fill={color} />}
    {k === "squareOpen" && <rect x="2" y="2" width="8" height="8" fill="none" stroke={color} strokeWidth="2" />}
  </svg>
);

const In = ({ k, color, label, children }: { k: PinKind; color?: string; label?: string; children?: React.ReactNode }) => (
  <Side>
    <Pin k={k} color={color} />
    {label}
    {children}
  </Side>
);

const Out = ({ k, color, label }: { k: PinKind; color?: string; label?: string }) => (
  <Side>
    {label}
    <Pin k={k} color={color} />
  </Side>
);

const tones = { green: "#577d57", blue: "#2f5f86", teal: "#176a6c", red: "#8d2529" };

const MathNode = styled(NodeBox)`
  background: linear-gradient(#3f3f3f, #1c1c1c 45%, #141414);
  border-radius: 8px;
`;

const MathMark = styled.span<{ $x: number; $y: number; $size: number }>`
  position: absolute;
  left: ${(p) => p.$x}px;
  top: ${(p) => p.$y}px;
  display: flex;
  align-items: center;
  gap: 4px;
  font-size: ${(p) => p.$size}px;
  line-height: ${(p) => p.$size}px;
  color: #b4b4b4;
`;

const VarNode = styled(NodeBox)`
  display: flex;
  align-items: center;
  justify-content: flex-end;
  padding-right: 6px;
  border-radius: 12px;
  background: radial-gradient(circle at 45% 0, #2f7391, transparent 60%), linear-gradient(#3a3f42, #121619);
`;

const Bubble = styled.div`
  position: absolute;
  left: 246px;
  top: 936px;
  width: 88px;
  height: 41px;
  display: grid;
  place-items: center;
  border: 3px solid #e4e4e4;
  border-radius: 5px;
  background: #c2c2c2;
  color: #4d4d4d;
  font-size: 19px;
  line-height: 24px;
  &::after {
    content: "";
    position: absolute;
    left: 9px;
    top: 38px;
    border: 6px solid transparent;
    border-top: 8px solid #d0d0d0;
  }
`;

const CommentBox = styled.div`
  position: absolute;
  left: 247px;
  top: 989px;
  width: 479px;
  height: 140px;
  background: rgba(140, 140, 140, 0.62);
  border: 1px solid #777;
`;

const CommentHead = styled.div`
  height: 29px;
  padding-left: 10px;
  background: #a8a8a8;
  font-size: 18px;
  line-height: 30px;
  color: #e8e8e8;
  text-shadow: 1px 2px 1px #555;
`;

const FadedPin = styled.div`
  position: absolute;
  left: 810px;
  top: 0;
  width: 218px;
  height: 24px;
  padding: 0 8px 4px;
  display: flex;
  gap: 3px;
  align-items: center;
  background: #0e0e0e;
  font-size: 10px;
  color: #a0a0a0;
`;

const hitOuts: [string, PinKind, string][] = [
  ["Blocking Hit", "ring", col.red],
  ["Initial Overlap", "ring", col.red],
  ["Time", "ring", col.green],
  ["Distance", "ring", col.green],
  ["Location", "ring", col.gold],
  ["Impact Point", "ring", col.gold],
  ["Normal", "ring", col.gold],
  ["Impact Normal", "ring", col.gold],
  ["Phys Mat", "ring", col.blue],
  ["Hit Actor", "dot", col.blue],
  ["Hit Component", "dot", col.blue],
  ["Hit Bone Name", "ring", col.violet],
  ["Hit Item", "ring", col.cyan],
  ["Face Index", "ring", col.cyan],
  ["Trace Start", "ring", col.gold],
  ["Trace End", "ring", col.gold],
];

const overlapOuts: [string, string][] = [
  ["Overlapped Component", col.blue],
  ["Other Actor", col.blue],
  ["Other Comp", col.blue],
  ["Other Body Index", col.cyan],
  ["From Sweep", col.red],
  ["Sweep Result", col.deep],
];

const HitRows = styled.div`
  display: grid;
  height: 312px;
  grid-auto-rows: 1fr;
`;

const OverlapRows = styled.div`
  display: grid;
  height: 118px;
  grid-auto-rows: 1fr;
`;

const AddPin = ({ x, y }: { x: number; y: number }) => (
  <MathMark $x={x} $y={y} $size={10}>
    Add pin <Plus size={8} />
  </MathMark>
);

const TargetNode = ({ x, y, title }: { x: number; y: number; title: string }) => (
  <NodeBox $x={x} $y={y} $w={164} $h={51}>
    <NodeHead $tone={tones.green} $h={28}>
      <FuncIcon w={11} color="#8fdc8f" />
      <NodeTitle>
        {title}
        <NodeSub>Target is Scene Component</NodeSub>
      </NodeTitle>
    </NodeHead>
    <PinRow $h={23}>
      <In k="dot" color={col.blue} label="Target" />
      <Out k="dot" color={col.gold} label="Return Value" />
    </PinRow>
  </NodeBox>
);

const CastNode = ({ x, y, linked }: { x: number; y: number; linked?: boolean }) => (
  <NodeBox $x={x} $y={y} $w={185} $h={84}>
    <NodeHead $tone={tones.teal} $h={18}>
      <svg width="12" height="12" viewBox="0 0 12 12" aria-hidden>
        <path d="M0 4H4L6 6L8 4H12V8H8L6 7L4 8H0Z" fill="#e6e6e6" />
      </svg>
      <NodeTitle>Cast To BP_BoxMesh_Red</NodeTitle>
    </NodeHead>
    <PinRow $h={22}>
      <In k={linked ? "exec" : "execOpen"} />
      <Out k="exec" />
    </PinRow>
    <PinRow $h={20}>
      <In k={linked ? "dot" : "ring"} color={linked ? col.blue : "#888"} label="Object" />
      <Out k="execOpen" label="Cast Failed" />
    </PinRow>
    <PinRow $h={21}>
      <span />
      <Out k="dot" color={col.blue} label="As BP Box Mesh Red" />
    </PinRow>
  </NodeBox>
);

const Graph = () => (
  <Canvas>
    <Vignette />
    <DarkComment />
    <FadedPin>
      <Pin k="ring" color="#55802f" /> Out Range B <ValueBox>0.0</ValueBox>
    </FadedPin>
    <Wires>
      <g transform={`translate(${-VIEW.x} ${-VIEW.y})`} fill="none" strokeLinecap="round">
        <path d="M1841 449L1849 449L1849 441Z" fill="#777" />
        <g stroke="#f2f2f2" strokeWidth="5">
          <path d="M510 562C760 563 1000 574 1262 574" />
          <path d="M1500 574H1740M1912 574H1990" />
        </g>
        <g stroke="#2f8dbe" strokeWidth="3">
          <path d="M862 664C886 664 884 622 912 621" />
          <path d="M862 664C892 664 866 752 900 752" />
          <path d="M1676 869C1780 869 1646 596 1740 595" />
          <path d="M1676 889L1730 887" />
          <path d="M1912 615C1945 616 1950 594 1992 593" />
        </g>
        <g stroke="#c79a34" strokeWidth="3">
          <path d="M1062 621C1150 621 1160 595 1258 595" />
          <path d="M1162 686C1210 686 1200 614 1258 614" />
        </g>
        <path d="M1166 814C1240 814 1180 656 1258 656" stroke="#1b8472" strokeWidth="4" />
        <path d="M1502 597C1530 597 1516 690 1546 692" stroke="#1e56ad" strokeWidth="3" />
        <path d="M1868 886C1975 886 1890 613 1992 613" stroke="#b01d96" strokeWidth="4" />
      </g>
    </Wires>

    <NodeBox $x={1253} $y={545} $w={255} $h={241}>
      <NodeHead $tone={tones.blue} $h={18}>
        <FuncIcon w={11} color="#9fd0f5" />
        <NodeTitle>SphereTraceForObjects</NodeTitle>
      </NodeHead>
      <PinRow $h={22}><In k="exec" /><Out k="exec" /></PinRow>
      <PinRow $h={20}>
        <In k="dot" color={col.gold} label="Start" />
        <Out k="dot" color={col.deep} label="Out Hit" />
      </PinRow>
      <PinRow $h={20}>
        <In k="dot" color={col.gold} label="End" />
        <Out k="ring" color={col.red} label="Return Value" />
      </PinRow>
      <PinRow $h={20}>
        <In k="ring" color={col.green} label="Radius"><ValueBox>0.0</ValueBox></In>
      </PinRow>
      <PinRow $h={22}><In k="square" color={col.teal} label="Object Types" /></PinRow>
      <PinRow $h={21}>
        <In k="ring" color={col.red} label="Trace Complex"><MiniCheck type="checkbox" aria-label="Trace Complex" /></In>
      </PinRow>
      <PinRow $h={24}><In k="squareOpen" color={col.blue} label="Actors to Ignore" /></PinRow>
      <PinRow $h={30}>
        <In k="ring" color={col.teal}>
          <Stack>
            Draw Debug Type
            <SelectShell $w={129} $h={16} $pad={3}>
              <BareSelect $size={9} aria-label="Draw Debug Type"><option>None</option></BareSelect>
              <Caret color="#222" w={7} />
            </SelectShell>
          </Stack>
        </In>
      </PinRow>
      <PinRow $h={30}>
        <In k="ring" color={col.red} label="Ignore Self">
          <MiniCheck type="checkbox" defaultChecked aria-label="Ignore Self" />
        </In>
      </PinRow>
      <PinRow $h={12}><span /><Caret w={9} /><span /></PinRow>
    </NodeBox>

    <TargetNode x={905} y={582} title="GetWorldLocation" />
    <TargetNode x={893} y={713} title="Get Forward Vector" />

    <VarNode $x={774} $y={652} $w={94} $h={27}>
      <Out k="dot" color={col.blue} label="Jian Ren" />
    </VarNode>

    <MathNode $x={1062} $y={676} $w={104} $h={46}>
      <PinRow $h={24}><In k="dot" color={col.gold} /><Out k="dot" color={col.gold} /></PinRow>
      <PinRow $h={12}><In k="dot" color={col.gold} /></PinRow>
      <MathMark $x={46} $y={13} $size={16}>+</MathMark>
      <AddPin x={48} y={30} />
    </MathNode>

    <MathNode $x={1062} $y={736} $w={109} $h={42}>
      <PinRow $h={42}>
        <Stack $gap={6}>
          <In k="dot" color={col.gold} />
          <In k="ring" color={col.green}><ValueBox>100.0</ValueBox></In>
        </Stack>
        <Out k="dot" color={col.gold} />
      </PinRow>
      <MathMark $x={49} $y={9} $size={14}>×</MathMark>
    </MathNode>

    <Wires>
      <g transform={`translate(${-VIEW.x} ${-VIEW.y})`} fill="none" stroke="#c79a34" strokeWidth="3" strokeLinecap="round">
        <path d="M1066 622C1074 634 1058 680 1072 688" />
        <path d="M1046 752L1072 747" />
        <path d="M1072 706C1050 706 1054 712 1070 718L1166 748C1180 754 1178 760 1162 758" />
      </g>
    </Wires>

    <NodeBox $x={941} $y={785} $w={230} $h={63}>
      <NodeHead $tone={tones.green} $h={18}>
        <svg width="12" height="12" viewBox="0 0 12 12" aria-hidden>
          <path d="M0 2H4V10H0M8 2H12M8 6H12M8 10H12M4 6H8" stroke="#ddd" strokeWidth="1.6" fill="none" />
        </svg>
        <NodeTitle>Make Array</NodeTitle>
      </NodeHead>
      <PinRow $h={35}>
        <In k="ring" color={col.teal}>
          <Stack>
            [0]
            <SelectShell $w={129} $h={16} $pad={3}>
              <BareSelect $size={9} aria-label="Array element 0"><option>BoxMesh</option></BareSelect>
              <Caret color="#222" w={7} />
            </SelectShell>
          </Stack>
        </In>
        <TopSide><Out k="square" color={col.teal} label="Array" /></TopSide>
      </PinRow>
      <AddPin x={173} y={50} />
    </NodeBox>

    <CastNode x={1733} y={545} linked />

    <NodeBox $x={1542} $y={666} $w={141} $h={332}>
      <NodeHead $tone={tones.green} $h={18}>
        <svg width="12" height="12" viewBox="0 0 12 12" aria-hidden>
          <path d="M11 1L3 6L11 11M0 6H11" stroke="#8ab8e8" strokeWidth="2" fill="none" />
        </svg>
        <NodeTitle>Break Hit Result</NodeTitle>
      </NodeHead>
      <HitRows>
        {hitOuts.map(([label, k, color], i) => (
          <PinRow key={label} $h={19}>
            {i === 0 ? <In k="dot" color={col.deep} label="Hit" /> : <span />}
            <Out k={k} color={color} label={label} />
          </PinRow>
        ))}
      </HitRows>
    </NodeBox>

    <NodeBox $x={1721} $y={858} $w={153} $h={41}>
      <NodeHead $tone={tones.green} $h={18}>
        <FuncIcon w={11} color="#8fdc8f" />
        <NodeTitle>Get Object Name</NodeTitle>
      </NodeHead>
      <PinRow $h={21}>
        <In k="dot" color={col.blue} label="Object" />
        <Out k="square" color={col.pink} label="Return Value" />
      </PinRow>
    </NodeBox>

    <NodeBox $x={1986} $y={533} $w={40} $h={92}>
      <NodeHead $tone="#4c7396" $h={28} />
    </NodeBox>

    <NodeBox $x={500} $y={941} $w={176} $h={160}>
      <NodeHead $tone={tones.red} $h={18}>
        <NodeTitle>&nbsp;&nbsp;&nbsp;ent Begin Overlap (JianRen)</NodeTitle>
        <Pin k="squareOpen" color="#e04a4a" />
      </NodeHead>
      <PinRow $h={22}><span /><Out k="execOpen" /></PinRow>
      <OverlapRows>
        {overlapOuts.map(([label, color]) => (
          <PinRow key={label} $h={19}><span /><Out k="ring" color={color} label={label} /></PinRow>
        ))}
      </OverlapRows>
    </NodeBox>

    <Bubble>不精确</Bubble>
    <CommentBox><CommentHead>不精确</CommentHead></CommentBox>
    <CastNode x={796} y={1325} />
    <Wires>
      <g transform={`translate(${-VIEW.x} ${-VIEW.y})`} fill="none">
        <path d="M976 1355C1010 1355 1020 1378 1056 1378" stroke="#f2f2f2" strokeWidth="5" />
        <path d="M976 1396L1056 1398" stroke="#2f8dbe" strokeWidth="3" />
      </g>
    </Wires>
    <NodeBox $x={1049} $y={1337} $w={163} $h={90}>
      <NodeHead $tone="#35648c" $h={29}>
        <svg width="12" height="12" viewBox="0 0 12 12" aria-hidden>
          <path d="M6 1L11 6L6 11L1 6Z" fill="none" stroke="#e6e6e6" strokeWidth="1.8" />
        </svg>
        <NodeTitle>
          Cut Box Mesh
          <NodeSub>Target is BP Box Mesh Red</NodeSub>
        </NodeTitle>
      </NodeHead>
      <PinRow $h={23}><In k="exec" /><Out k="execOpen" /></PinRow>
      <PinRow $h={20}><In k="dot" color={col.blue} label="Target" /></PinRow>
    </NodeBox>

    <GraphBar>
      <svg width="31" height="31" viewBox="0 0 30 30" aria-hidden>
        <path d="M15 3L18.5 11.5L27 12L20.5 18L23 27L15 22L7 27L9.5 18L3 12L11.5 11.5Z" fill="none" stroke="#ddd" strokeWidth="2" />
      </svg>
      <BarRule $before={9} />
      <svg width="26" height="34" viewBox="0 0 26 34" aria-hidden>
        <path d="M0 17L14 1V9H25V25H14V33Z" fill="#dff0ee" />
      </svg>
      <BarGap />
      <svg width="28" height="34" viewBox="0 0 28 34" aria-hidden>
        <path d="M27 17L14 1V9H1V25H14V33Z" fill="#777" />
      </svg>
      <BarRule $before={23} />
      <GraphIcon w={37} />
      <BarCrumb>BP_MotionController</BarCrumb>
      <svg width="14" height="24" viewBox="0 0 14 24" aria-hidden>
        <path d="M2 2L11 12L2 22" fill="none" stroke="#ccc" strokeWidth="3" />
      </svg>
      <Crumb2>Event Graph</Crumb2>
      <ZoomText>Zoom -4</ZoomText>
    </GraphBar>
    <BlueprintMark>BLUEPRINT</BlueprintMark>
  </Canvas>
);

const docTabs = ["Viewport", "Grab Actor", "Get Actor Near H", "Get Teleport Dest", "Activate Teleport", "Trace Teleport D", "Event Graph"];

const GraphDock = () => (
  <Dock $grow>
    <TabStrip>
      {docTabs.map((t, i) => (
        <DockTab key={t} $w={207} $tone={i === 0 ? "gold" : i < 6 ? "dim" : undefined}>
          <DockTabIcon>{i === 0 ? <ViewportIcon /> : i === 6 ? <GraphIcon /> : <FuncIcon />}</DockTabIcon>
          <TabText>{t}</TabText>
          <CloseMark />
        </DockTab>
      ))}
    </TabStrip>
    <GraphFrame><Graph /></GraphFrame>
  </Dock>
);

/* ---------- details ---------- */

const DetailsBody = styled.div`
  flex: 1;
  min-height: 0;
  display: flex;
  flex-direction: column;
  padding: 4px 3px 0 4px;
  background: #565656;
  border-radius: 3px;
`;

const DetailsHead = styled.div`
  display: flex;
  align-items: center;
  height: 34px;
  padding: 0 3px 0 2px;
  gap: 13px;
`;

const GridButton = styled.button`
  width: 39px;
  height: 34px;
  display: grid;
  place-items: center;
  background: linear-gradient(#ddd, #aaa);
  border-radius: 2px;
`;

const ViewMenu = styled.button`
  display: flex;
  align-items: center;
  gap: 6px;
  margin-left: -6px;
`;

const Sections = styled.div`
  flex: 1;
  min-height: 0;
  overflow: hidden;
  position: relative;
  display: flex;
  flex-direction: column;
  gap: 5px;
`;

const Section = styled.div<{ $scrolled?: boolean }>`
  flex: none;
  border-radius: 4px;
  background: ${c.body};
  overflow: hidden;
  ${(p) => p.$scrolled && css`margin-top: -26px;`}
`;

const SectionHead = styled.div`
  height: 31px;
  display: flex;
  align-items: center;
  gap: 5px;
  padding-left: 3px;
  background: ${c.head};
  font-size: 19px;
  font-weight: 700;
  color: #cdcdcd;
`;

const PropRow = styled.div<{ $tall?: boolean }>`
  height: ${(p) => (p.$tall ? 44 : 38)}px;
  display: grid;
  grid-template-columns: 292px 1fr;
  font-size: 17px;
  color: #bebebe;
`;

const PropName = styled.div`
  display: flex;
  align-items: center;
  gap: 7px;
  padding-left: 22px;
`;

const PropValue = styled.div`
  display: flex;
  align-items: center;
  padding-left: 6px;
  border-left: 2px solid #282828;
`;

const PropTail = styled.div`
  height: 18px;
  margin-left: 292px;
  border-left: 2px solid #282828;
`;

const Advanced = styled.button`
  width: 100%;
  height: 20px;
  padding-right: 26px;
  display: grid;
  place-items: center;
  background: #474747;
`;

const Check = styled.input`
  appearance: none;
  width: 21px;
  height: 21px;
  margin: 0;
  border-radius: 3px;
  background: #a9a9a9;
  &:checked { background: #e6e6e6; }
`;

const CheckWrap = styled.span`
  position: relative;
  display: grid;
  place-items: center;
`;

const Tick = styled.svg`
  position: absolute;
`;

const Axis = styled.label<{ $color: string }>`
  width: 159px;
  height: 27px;
  margin-right: 3px;
  display: flex;
  align-items: center;
  overflow: hidden;
  border-radius: 3px;
  background: linear-gradient(90deg, ${(p) => p.$color} 18px, #d8d8d8 18px);
  color: #f2f2f2;
  padding: 0 8px 0 3px;
`;

const AxisInput = styled.input`
  flex: 1;
  min-width: 0;
  border: 0;
  margin-left: 12px;
  padding: 0;
  background: none;
  color: #333;
  font-size: 17px;
`;

const Mobility = styled.div`
  display: flex;
  gap: 2px;
  border-radius: 12px;
  overflow: hidden;
`;

const MobilityOption = styled.button<{ $on?: boolean }>`
  width: 130px;
  height: 31px;
  display: flex;
  align-items: center;
  padding: 0 0 0 8px;
  font-size: 17px;
  background: ${(p) => (p.$on ? "#c18f26" : "#585858")};
  color: ${(p) => (p.$on ? "#2e220a" : "#b4b4b4")};
`;

const MobilityText = styled.span`
  flex: 1;
  text-align: center;
`;

const SocketInput = styled.input`
  width: 113px;
  height: 31px;
  border: 1px solid #888;
  padding: 0 6px;
  background: #7a7a7a;
  color: #b8b8b8;
  font-size: 17px;
`;

const IconButton = styled.button<{ $ml: number }>`
  margin-left: ${(p) => p.$ml}px;
`;

const ArrayCount = styled.span`
  padding-left: 4px;
`;

const EventButton = styled.button`
  width: 224px;
  height: 30px;
  display: grid;
  place-items: center;
  background: ${c.green};
  border: 1px solid #459a49;
`;

const DetailThumb = styled.div`
  position: absolute;
  right: 4px;
  top: 131px;
  bottom: 6px;
  width: 16px;
  background: #fff;
`;

const DetailTrack = styled.div`
  position: absolute;
  right: 11px;
  top: 5px;
  height: 126px;
  width: 2px;
  background: #555;
`;

const CheckBox = ({ name, on }: { name: string; on?: boolean }) => (
  <CheckWrap>
    <Check type="checkbox" defaultChecked={on} aria-label={name} />
    {on && (
      <Tick width="15" height="15" viewBox="0 0 15 15" aria-hidden>
        <path d="M2 8L6 12L13 2" fill="none" stroke="#444" strokeWidth="3" />
      </Tick>
    )}
  </CheckWrap>
);

const Prop = ({ name, tall, icon, after, children }: { name: string; tall?: boolean; icon?: React.ReactNode; after?: React.ReactNode; children: React.ReactNode }) => (
  <PropRow $tall={tall}>
    <PropName>{icon}{name}{after}</PropName>
    <PropValue>{children}</PropValue>
  </PropRow>
);

const DetailSection = ({ title, children, tail = true }: { title: string; children?: React.ReactNode; tail?: boolean }) => (
  <Section>
    <SectionHead>{children ? <OpenTri /> : <ClosedTri />}{title}</SectionHead>
    {children}
    {children && tail && <PropTail />}
  </Section>
);

const DragMark = () => (
  <svg width="12" height="12" viewBox="0 0 12 12" aria-hidden>
    <path d="M5 0H12V7ZM0 5V12H7Z" fill="#222" />
  </svg>
);

const DiamondIcon = () => (
  <svg width="24" height="24" viewBox="0 0 24 24" aria-hidden>
    <path d="M12 2L22 12L12 22L2 12Z" fill="none" stroke="#e2e2e2" strokeWidth="2.6" />
    <path d="M12 5L5 12L12 19V16L9 14V10L12 8Z" fill="#e2e2e2" />
  </svg>
);

const DetailsDock = () => (
  <Dock $w={872}>
    <TabStrip>
      <DockTab $w={224}>
        <DockTabIcon><InfoIcon /></DockTabIcon>
        <TabText>Details</TabText>
        <CloseMark />
      </DockTab>
    </TabStrip>
    <DetailsBody>
      <DetailsHead>
        <SearchBox>
          <SearchInput aria-label="Search details" placeholder="Search Details" />
          <Magnifier />
        </SearchBox>
        <GridButton aria-label="Property matrix">
          <svg width="22" height="22" viewBox="0 0 22 22" aria-hidden>
            {[0, 6, 12, 18].map((y) => [0, 6, 12, 18].map((x) => <rect key={`${x}-${y}`} x={x} y={y} width="4" height="4" fill="#777" />))}
          </svg>
        </GridButton>
        <ViewMenu aria-label="View options"><EyeIcon /><Caret w={12} /></ViewMenu>
      </DetailsHead>
      <Sections>
        <Section $scrolled>
          <Prop name="Editable when Inherited"><CheckBox name="Editable when Inherited" on /></Prop>
          <PropTail />
        </Section>
        <DetailSection title="Transform">
          <Prop name="Scale" after={<Caret w={12} />}>
            {[["X", "#c0301c"], ["Y", "#6ca31c"], ["Z", "#2f74cf"]].map(([a, color]) => (
              <Axis key={a} $color={color}>
                {a}
                <AxisInput defaultValue="1.0" />
                <DragMark />
              </Axis>
            ))}
            <svg width="22" height="26" viewBox="0 0 22 26" aria-hidden>
              <path d="M3 13V6Q3 2 7 2Q11 2 11 6V13" fill="none" stroke="#999" strokeWidth="2" />
              <rect x="7" y="13" width="14" height="11" rx="2" fill="#aaa" />
              <rect x="13" y="16" width="2" height="5" fill="#555" />
            </svg>
          </Prop>
          <Prop name="Mobility">
            <Mobility>
              <MobilityOption>
                <svg width="20" height="20" viewBox="0 0 20 20" aria-hidden><rect x="4" y="5" width="12" height="12" rx="4" fill="#f4f4f4" /></svg>
                <MobilityText>Static</MobilityText>
              </MobilityOption>
              <MobilityOption>
                <svg width="22" height="22" viewBox="0 0 22 22" aria-hidden>
                  <path d="M7 1V21M15 1V21" stroke="#ddd" strokeWidth="2" />
                  <path d="M3 13H11V18H3ZM11 4H19V9H11Z" fill="#eee" />
                </svg>
                <MobilityText>Stationary</MobilityText>
              </MobilityOption>
              <MobilityOption $on>
                <svg width="22" height="22" viewBox="0 0 22 22" aria-hidden>
                  <path d="M11 0L15 5H7ZM11 22L15 17H7ZM0 11L5 7V15ZM22 11L17 7V15Z" fill="#f5e6c0" />
                  <circle cx="11" cy="11" r="5" fill="none" stroke="#f5e6c0" strokeWidth="2" />
                </svg>
                <MobilityText>Movable</MobilityText>
              </MobilityOption>
            </Mobility>
          </Prop>
        </DetailSection>
        <DetailSection title="Sockets">
          <Prop name="Parent Socket" tall>
            <SocketInput aria-label="Parent Socket" defaultValue="None" />
            <IconButton $ml={8} aria-label="Browse socket"><Magnifier color="#c8c8c8" size={20} /></IconButton>
            <IconButton $ml={19} aria-label="Clear socket">
              <svg width="16" height="16" viewBox="0 0 16 16" aria-hidden><path d="M2 2L14 14M14 2L2 14" stroke="#eee" strokeWidth="4.5" /></svg>
            </IconButton>
          </Prop>
        </DetailSection>
        <DetailSection title="Rendering" tail={false}>
          <Prop name="Visible"><CheckBox name="Visible" on /></Prop>
          <Prop name="Hidden in Game"><CheckBox name="Hidden in Game" /></Prop>
          <Advanced aria-label="Show advanced"><Caret w={16} /></Advanced>
        </DetailSection>
        <DetailSection title="Tags">
          <Prop name="Component Tags" tall>
            <ArrayCount>0 Array elements</ArrayCount>
            <IconButton $ml={33} aria-label="Add tag"><Plus size={17} /></IconButton>
            <IconButton $ml={20} aria-label="Clear tags">
              <svg width="17" height="20" viewBox="0 0 17 20" aria-hidden>
                <path d="M1 3H6V1H11V3H16V6H1ZM2 7H15V17Q15 19 13 19H4Q2 19 2 17Z" fill="#c4c4c4" />
                <path d="M5.500 9V16M8.500 9V16M11.500 9V16" stroke="#555" strokeWidth="1.500" />
              </svg>
            </IconButton>
          </Prop>
        </DetailSection>
        <DetailSection title="Component Replication">
          <Prop name="Component Replicates"><CheckBox name="Component Replicates" /></Prop>
        </DetailSection>
        <DetailSection title="Activation">
          <Prop name="Auto Activate"><CheckBox name="Auto Activate" /></Prop>
        </DetailSection>
        <DetailSection title="Cooking">
          <Prop name="Is Editor Only"><CheckBox name="Is Editor Only" /></Prop>
        </DetailSection>
        <DetailSection title="Events">
          {["Physics Volume Changed", "On Component Activated", "On Component Deactivated"].map((n) => (
            <Prop key={n} name={n} icon={<DiamondIcon />}>
              <EventButton aria-label={`Add ${n}`}><Plus size={17} /></EventButton>
            </Prop>
          ))}
        </DetailSection>
        <DetailSection title="Physics" />
        <DetailSection title="LOD" />
        <DetailSection title="Asset User Data" />
        <DetailSection title="Collision" />
        <DetailTrack />
        <DetailThumb />
      </Sections>
    </DetailsBody>
  </Dock>
);

const MainRow = styled.div`
  flex: 1;
  min-height: 0;
  display: flex;
  gap: 7px;
`;

/* ---------- compiler results ---------- */

const CompilerDock = styled.section`
  flex: none;
  margin-top: 9px;
`;

const CompilerBody = styled.div`
  height: 255px;
  padding: 8px 7px 52px;
  border: 2px solid ${c.edge};
  border-radius: 3px;
  background: #404040;
`;

const LogView = styled.div`
  height: 100%;
  padding: 5px 14px;
  display: flex;
  gap: 19px;
  background: #222;
  font-size: 18px;
  line-height: 24px;
  color: #979797;
`;

const Bullet = styled.span`
  color: #8fc4ea;
`;

/* ---------- overlays ---------- */

const RedFrame = styled.div<{ $x: number; $y: number; $w: number; $h: number }>`
  position: absolute;
  left: ${(p) => p.$x}px;
  top: ${(p) => p.$y}px;
  width: ${(p) => p.$w}px;
  height: ${(p) => p.$h}px;
  border: 5px solid ${c.red};
  border-radius: 9px;
`;

const RedDigit = styled.div<{ $x: number; $y: number }>`
  position: absolute;
  left: ${(p) => p.$x}px;
  top: ${(p) => p.$y}px;
  font-family: "Liberation Sans", sans-serif;
  font-size: 46px;
  line-height: 46px;
  color: ${c.red};
`;

const DropTip = styled.div`
  position: absolute;
  left: 174px;
  top: 364px;
  height: 48px;
  width: 304px;
  line-height: 46px;
  text-align: center;
  font-size: 17px;
  background: rgba(175, 175, 175, 0.78);
  border: 1px solid #333;
  color: #3c3c3c;
`;

const Cursor = styled.svg`
  position: absolute;
  left: 148px;
  top: 350px;
`;

const Uploader = styled.div`
  position: absolute;
  right: 54px;
  top: 143px;
  display: flex;
  gap: 26px;
  font-family: "Noto Sans CJK SC", sans-serif;
  font-size: 57px;
  line-height: 112px;
  font-weight: 500;
  color: #d2d2d2;
  white-space: nowrap;
`;

const TvIcon = styled.svg`
  position: absolute;
  right: 77px;
  bottom: 225px;
`;

const Toast = styled.div`
  position: absolute;
  right: 23px;
  bottom: 112px;
  width: 494px;
  height: 95px;
  display: flex;
  gap: 21px;
  padding: 9px 29px;
  background: linear-gradient(#2a2a2a, #191919 40%);
  border: 2px solid #0a0a0a;
`;

const ToastIcon = styled.div`
  padding-top: 13px;
`;

const ToastTitle = styled.div`
  font-size: 31px;
  line-height: 38px;
  margin-bottom: 5px;
  font-weight: 700;
  color: #e2e2e2;
  white-space: nowrap;
`;

const ToastActions = styled.div`
  display: flex;
  gap: 7px;
`;

const ToastButton = styled.button`
  height: 31px;
  padding: 0 8px;
  background: linear-gradient(#e6e6e6, #b0b0b0);
  border: 1px solid #777;
  border-radius: 2px;
  color: #2e2e2e;
`;

const Credit = styled.div`
  position: absolute;
  right: 16px;
  bottom: 6px;
  font-family: "Noto Sans CJK SC", sans-serif;
  font-size: 20px;
  line-height: 28px;
  font-weight: 300;
  color: #b4b4b4;
`;

const BiliHalf = ({ dx }: { dx: number }) => (
  <g transform={`translate(${dx} 0)`} fill="#d4d4d4">
    <path d="M0 7L17 0L20 61Q58 54 61 72Q58 92 12 95ZM27 69L44 75L29 86Z" fillRule="evenodd" />
    <path d="M56 30L61 29L63 43L58 44ZM64 29L69 28L71 42L66 43ZM58 50L67 48L75 88L66 90Z" />
    <path d="M71 13L82 11L87 83L79 85Z" />
    <path d="M90 31L95 30L97 44L92 45ZM98 31L103 30L104 44L99 45ZM91 51L102 49L105 88L96 90Z" />
  </g>
);

export default function App() {
  return (
    <>
      <GlobalStyle />
      <Page>
        <Editor>
          <TitleBar>
            <LogoBox><UnrealLogo /></LogoBox>
            <WindowTab $w={305} $pad="0 32px 0 29px" $first><TabText>MotionControllerMap</TabText></WindowTab>
            <WindowTab $w={290} $pad="0 20px 0 13px">
              <SphereBadge />
              <TabText>BP_BoxMesh_Red•</TabText>
              <CloseMark />
            </WindowTab>
            <WindowTab $w={312} $pad="0 30px 0 22px" $active>
              <SphereBadge />
              <TabText>BP_MotionController•</TabText>
              <CloseMark />
            </WindowTab>
            <TitleRight>
              <CapIcon>
                <svg width="26" height="26" viewBox="0 0 26 26" aria-hidden>
                  <path d="M2 8L14 1L25 8L14 17Z" fill="#9cc4ea" />
                  <path d="M8 13V20L14 24L21 19V12L14 17Z" fill="#4a6f9c" />
                  <path d="M3 9V22" stroke="#b98f68" strokeWidth="2" />
                </svg>
              </CapIcon>
              <WinButtons>
                <WinButton $w={36} aria-label="Minimize">
                  <svg width="16" height="14" viewBox="0 0 16 14" aria-hidden><rect y="8" width="16" height="5" fill="#eee" /></svg>
                </WinButton>
                <WinButton $w={37} aria-label="Restore">
                  <svg width="16" height="16" viewBox="0 0 16 16" aria-hidden>
                    <path d="M5 1H15V11" fill="none" stroke="#eee" strokeWidth="2" />
                    <rect x="2" y="5" width="9" height="9" fill="none" stroke="#eee" strokeWidth="3" />
                  </svg>
                </WinButton>
                <WinButton $w={61} aria-label="Close">
                  <svg width="16" height="14" viewBox="0 0 16 14" aria-hidden><path d="M2 1L14 13M14 1L2 13" stroke="#eee" strokeWidth="3.5" /></svg>
                </WinButton>
              </WinButtons>
            </TitleRight>
          </TitleBar>
          <MenuBar>
            {["File", "Edit", "Asset", "View", "Debug", "Window", "Help"].map((m) => (
              <MenuItem key={m}>{m}</MenuItem>
            ))}
            <ParentClass>Parent class: <ClassLink href="#actor">Actor</ClassLink></ParentClass>
          </MenuBar>
          <Workspace>
            <LeftColumn>
              <ComponentsPanel />
              <BlueprintPanel />
            </LeftColumn>
            <RightColumn>
              <MainToolbar />
              <MainRow>
                <GraphDock />
                <DetailsDock />
              </MainRow>
              <CompilerDock>
                <TabStrip>
                  <DockTab $w={225}>
                    <DockTabIcon><ConsoleIcon /></DockTabIcon>
                    <TabText>Compiler Results</TabText>
                    <CloseMark />
                  </DockTab>
                </TabStrip>
                <CompilerBody>
                  <LogView>
                    <Bullet>•</Bullet>
                    [1322.00] Compile of BP_MotionController successful! [in 316 ms] (/Game/VirtualRealityBP/Blueprints/BP_MotionController.BP_MotionController)
                  </LogView>
                </CompilerBody>
              </CompilerDock>
            </RightColumn>
          </Workspace>
        </Editor>

        <DropTip>Drop asset here to add a component.</DropTip>
        <Cursor width="20" height="28" viewBox="0 0 20 28" aria-hidden>
          <path d="M2 1L18 17H12L15 25L11 27L8 19L2 23Z" fill="#fff" stroke="#444" strokeWidth="1" />
        </Cursor>
        <RedFrame $x={-2} $y={193} $w={265} $h={54} />
        <RedFrame $x={1} $y={277} $w={228} $h={52} />
        <RedDigit $x={317} $y={196}>2</RedDigit>
        <RedDigit $x={272} $y={280}>1</RedDigit>
        <Uploader>
          CG学习笔记
          <svg width="211" height="96" viewBox="0 0 211 96" role="img" aria-label="bilibili">
            <BiliHalf dx={0} />
            <BiliHalf dx={106} />
          </svg>
        </Uploader>
        <TvIcon width="110" height="104" viewBox="0 0 110 104" role="img" aria-label="bilibili player">
          <path d="M33 6L42 20M77 6L68 20" stroke="#d4d4d4" strokeWidth="12" strokeLinecap="round" />
          <path
            d="M20 16Q55 13 90 16Q108 18 109 36Q111 60 109 83Q108 101 90 102Q55 105 20 102Q2 101 1 83Q-1 60 1 36Q2 18 20 16ZM38 44Q36 60 38 76Q40 84 48 80L72 65Q79 60 72 55L48 40Q40 37 38 44Z"
            fill="#d4d4d4"
            fillRule="evenodd"
          />
        </TvIcon>
        <Toast>
          <ToastIcon>
            <svg width="48" height="50" viewBox="0 0 48 50" aria-hidden>
              <path d="M24 2L46 48H2Z" fill="#5c5c5c" stroke="#111" strokeWidth="2" />
              <path d="M22 17H26L25 34H23ZM22 37H26V41H22Z" fill="#ddd" />
            </svg>
          </ToastIcon>
          <div>
            <ToastTitle>New plugins are available</ToastTitle>
            <ToastActions>
              <ToastButton>Manage Plugins...</ToastButton>
              <ToastButton>Dismiss</ToastButton>
            </ToastActions>
          </div>
        </Toast>
        <Credit>CSDN @这个软件需要设计一下</Credit>
      </Page>
    </>
  );
}
